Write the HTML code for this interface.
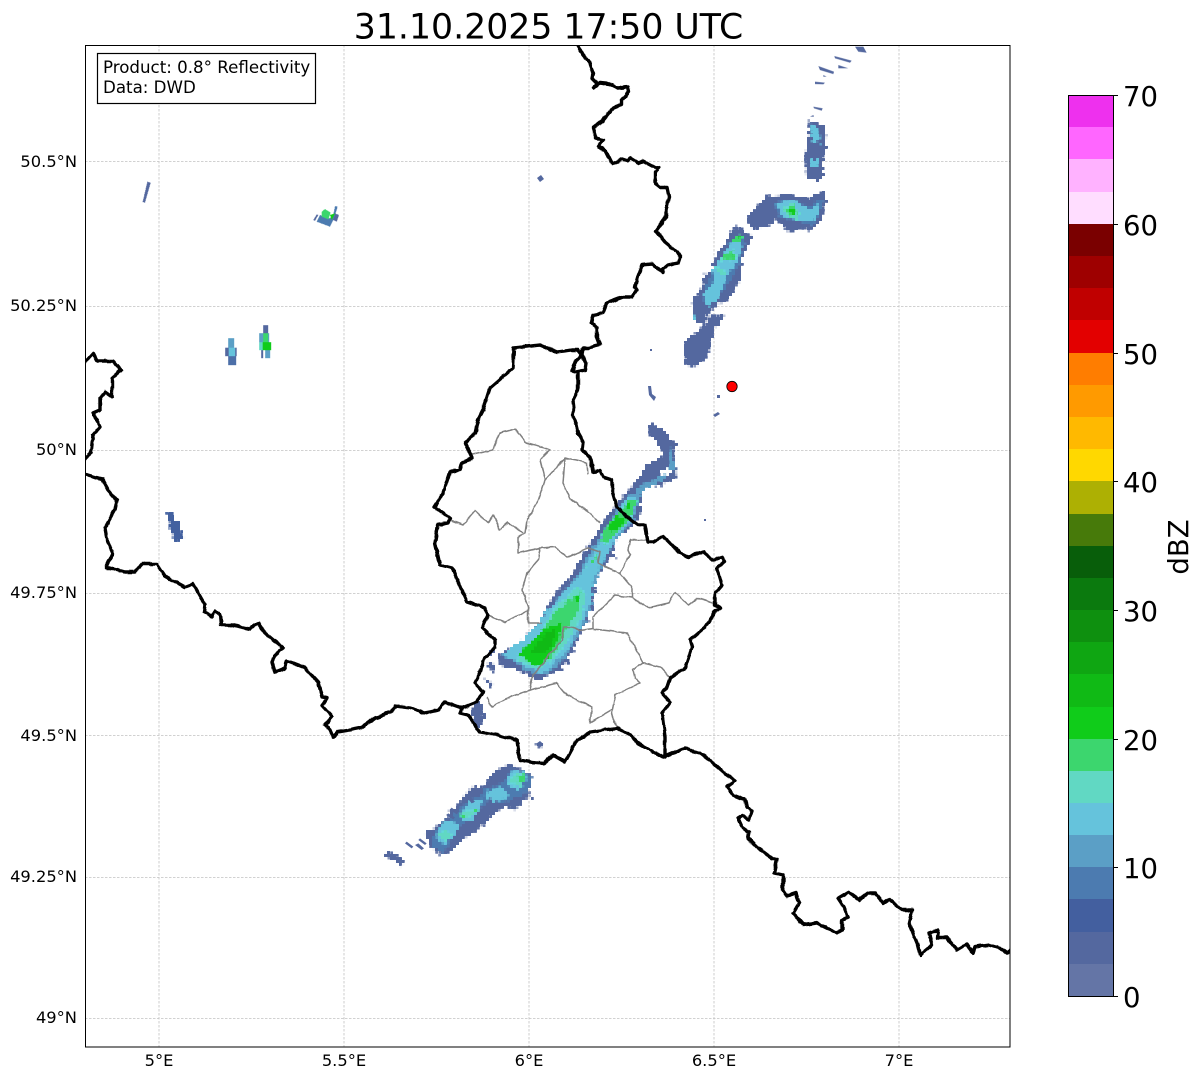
<!DOCTYPE html>
<html><head><meta charset="utf-8"><style>
html,body{margin:0;padding:0;background:#fff}
svg{display:block}
text{font-family:"DejaVu Sans","Liberation Sans",sans-serif;fill:#000}
.b{fill:none;stroke:#000;stroke-width:3.4;stroke-linejoin:round;stroke-linecap:round}
.g{fill:none;stroke:#808080;stroke-width:1.5;stroke-linejoin:round}
.t{font-size:16.3px}
.i{font-size:16.67px}
.c{font-size:27.5px}
</style></head><body>
<svg width="1202" height="1081" viewBox="0 0 1202 1081" xmlns="http://www.w3.org/2000/svg">
<defs>
<clipPath id="ax"><rect x="85" y="45" width="925" height="1002"/></clipPath>
<filter id="n" filterUnits="userSpaceOnUse" x="85" y="45" width="925" height="1002" color-interpolation-filters="sRGB">
<feTurbulence type="fractalNoise" baseFrequency="0.35" numOctaves="2" seed="4" result="t"/>
<feDisplacementMap in="SourceGraphic" in2="t" scale="6" xChannelSelector="R" yChannelSelector="G" result="d"/>
<feFlood x="85" y="45" width="1" height="1" flood-color="#000" result="f"/>
<feComposite in="f" in2="f" x="85" y="45" width="3" height="3" operator="over" result="c"/>
<feTile in="c" x="85" y="45" width="925" height="1002" result="g"/>
<feComposite in="d" in2="g" operator="in"/>
<feMorphology operator="dilate" radius="1"/>
</filter>
<filter id="w" filterUnits="userSpaceOnUse" x="85" y="45" width="925" height="1002" color-interpolation-filters="sRGB">
<feTurbulence type="fractalNoise" baseFrequency="0.12" numOctaves="2" seed="9" result="t"/>
<feDisplacementMap in="SourceGraphic" in2="t" scale="3" xChannelSelector="R" yChannelSelector="G"/>
</filter>
</defs>
<rect width="1202" height="1081" fill="#fff"/>
<text x="548.5" y="38.500" font-size="34.7" text-anchor="middle">31.10.2025 17:50 UTC</text>

<g stroke="#c2c2c2" stroke-width="0.8" stroke-dasharray="2.5 1.5" fill="none">
<path d="M159 45V1047M344 45V1047M529 45V1047M714 45V1047M899 45V1047"/>
<path d="M85 161.500H1010M85 306.500H1010M85 450.500H1010M85 593.500H1010M85 735.500H1010M85 877.500H1010M85 1018.500H1010"/>
</g>

<g clip-path="url(#ax)">
<g filter="url(#n)">
<g transform="translate(430,420) scale(.33333)">
<path fill="#54689f" d="M205 705 240 685 275 665 330 600 375 520 425 465 470 385 530 290 570 240 610 195 650 135 700 105 690 80 650 30 665 10 700 30 720 60 740 70 730 100 740 175 690 195 640 200 630 290 605 320 565 350 535 420 500 470 490 540 460 620 425 690 390 750 330 780 275 755 210 735Z"/>
<g stroke="#54689f" stroke-width="9" fill="none">
<path d="M475 555 492 565M460 595 478 605M415 690 432 696M395 720 416 726M375 745 396 755M495 440 512 450M525 395 556 410M540 380 552 390M435 465 446 470M455 425 466 430M180 695 192 700M230 690 246 700M260 680 275 690M385 530 400 538M355 590 365 596"/>
</g>
<path fill="#5b9fc6" d="M215 705 300 650 345 590 388 528 438 472 488 385 540 305 575 250 640 190 690 170 720 130 720 80 735 150 680 190 635 210 610 300 560 360 525 420 490 500 480 570 445 640 405 715 340 770 280 745Z"/>
<path fill="#65c3dc" d="M220 705 290 650 340 590 390 530 438 480 495 395 545 310 590 235 620 225 610 290 558 350 520 420 490 480 480 550 450 620 412 690 340 760 280 735Z"/>
<path fill="#61d8c3" d="M260 715 330 640 370 570 400 540 440 500 470 520 455 590 415 660 365 725 320 750Z"/>
<path fill="#3cd66e" d="M270 710 335 640 375 575 405 550 450 515 445 570 415 620 385 680 345 730 315 740Z"/>
<path fill="#10cc1a" d="M265 705 340 625 400 605 385 660 350 720 320 740Z"/>
<path fill="#10ba15" d="M305 695 345 640 380 625 365 675 335 705Z"/>
<path fill="#3cd66e" d="M510 360 535 310 565 280 600 240 620 240 605 290 560 340 525 375ZM470 440 510 395 490 430ZM430 530 450 520 445 545Z"/>
<path fill="#10cc1a" d="M530 320 560 285 590 300 565 330 540 335ZM580 260 600 245 600 265ZM430 530 450 525 445 545Z"/>
<path fill="#fff" d="M695 145 725 150 715 165 690 160Z"/>
<path fill="#54689f" d="M125 880 140 840 165 860 150 890 170 880 150 920 130 915ZM165 720 200 740 185 755ZM155 770 190 790 180 800ZM170 690 190 690 185 705Z"/>
<path fill="#54689f" d="M320 965 335 970 335 982 318 975Z"/>
</g>
<g transform="translate(670,40) scale(.33333)">
<path fill="#54689f" d="M45 905 100 860 130 825 160 830 130 880 110 950 80 985 45 975ZM70 775 100 735 100 700 135 700 130 670 195 555 245 590 215 660 210 720 170 785 130 800 100 850 70 840Z"/>
<path fill="#54689f" d="M240 520 290 470 350 462 420 475 460 455 470 480 455 540 420 575 405 565 360 575 320 540 290 560 250 570 230 540Z"/>
<path fill="#54689f" d="M418 240 465 260 470 320 460 360 460 410 440 425 412 415 405 360 412 310Z"/>
<path fill="#4c7bb0" d="M310 490 360 480 420 500 450 470 460 490 430 560 380 540 330 535ZM135 680 200 580 225 600 210 670 170 740 125 790 100 790 105 740Z"/>
<path fill="#65c3dc" d="M320 490 370 480 420 510 445 490 450 510 430 545 380 540 340 530ZM130 685 170 630 200 590 215 610 205 660 165 710 150 770 110 800 100 760 130 730ZM420 250 445 265 450 310 430 305ZM425 355 445 360 440 385 420 380ZM70 830 80 815 80 840Z"/>
<path fill="#61d8c3" d="M340 505 365 490 390 520 380 540 345 525ZM135 680 165 690 170 705 145 700ZM150 650 200 640 210 655 175 660 155 665Z"/>
<path fill="#3cd66e" d="M345 510 370 495 385 520 360 530ZM150 645 190 630 195 655 160 660ZM185 600 215 580 215 595 190 615Z"/>
<path fill="#10cc1a" d="M360 505 375 505 380 525 365 522ZM200 580 215 585 205 595ZM180 640 190 635 190 650ZM185 605 200 605 190 615Z"/>
</g>
<g transform="translate(370,730) scale(.33333)">
<path fill="#54689f" d="M160 305 185 300 205 285 225 270 300 175 320 170 340 175 360 140 380 120 420 100 490 140 470 200 440 240 400 230 375 250 345 280 285 325 235 370 210 375 180 345Z"/>
<g stroke="#54689f" stroke-width="9" fill="none"><path d="M375 125 396 135M360 145 386 160M290 205 311 215M265 310 286 325M275 285 301 295M460 195 491 205M240 240 261 250"/></g>
<path fill="#4c7bb0" d="M195 300 240 265 290 220 350 175 400 160 425 115 490 140 465 190 400 220 360 200 320 250 270 290 220 365 185 345Z"/>
<path fill="#65c3dc" d="M200 305 225 270 270 285 250 320 225 345 200 325ZM270 250 300 215 340 210 310 275 280 270ZM350 185 400 170 415 200 375 215 345 200ZM410 140 440 115 475 140 450 180 415 170Z"/>
<path fill="#61d8c3" d="M205 315 225 300 245 315 230 335ZM270 250 295 240 325 240 310 255 280 265ZM415 145 450 125 470 145 450 170 420 160Z"/>
<path fill="#3cd66e" d="M440 140 460 135 465 150 445 165ZM265 250 285 255 280 265ZM305 235 325 240 310 250Z"/>
<path fill="#54689f" d="M40 375 55 362 105 392 92 408Z"/>
</g>
<g transform="translate(0,340) scale(.33333)">
<path fill="#4361a0" d="M500 517 518 517 522 542 538 542 550 597 525 606 502 535Z"/>
</g>
</g>
<g transform="translate(670,40) scale(.33333)" fill="#54689f">
<path d="M430 200 458 205 455 212 432 205ZM435 125 465 128 460 133 435 132ZM445 78 492 95 490 102 450 90ZM493 48 545 62 540 68 495 55ZM505 75 535 85 505 85ZM555 20 580 20 590 38 565 35ZM460 105 470 110 460 110ZM430 225 432 230 420 230Z"/>
</g>
<g transform="translate(370,730) scale(.33333)" fill="#54689f">
<path d="M105 340 110 335 130 350 125 355ZM135 345 145 340 162 355 155 360ZM145 330 150 325 170 340 165 345ZM240 238 245 233 265 248 260 253ZM228 255 235 250 255 262 250 268ZM500 40 510 33 520 42 510 52ZM293 205 300 200 315 215 305 220Z"/>
</g>
<g transform="translate(100,170) scale(.33333)" shape-rendering="crispEdges">
<path fill="#54689f" d="M142 35 152 38 135 98 128 96Z"/>
<path fill="#54689f" d="M640 150 650 133 655 135 645 152ZM700 150 705 130 717 135 710 155Z"/>
<path fill="#4c7bb0" d="M660 135 690 145 700 135 705 108 713 110 700 150 690 170 650 155Z"/>
<path fill="#3cd66e" d="M665 125 675 117 692 128 685 148 665 140Z"/>
<path fill="#10cc1a" d="M690 135 705 130 695 150Z"/>
<rect x="384" y="505" width="18" height="28" fill="#5b9fc6"/><rect x="376" y="533" width="34" height="26" fill="#54689f"/><rect x="384" y="559" width="24" height="26" fill="#4c6fa8"/><rect x="386" y="533" width="20" height="26" fill="#65c3dc"/>
<rect x="490" y="465" width="14" height="25" fill="#54689f"/><rect x="478" y="490" width="30" height="50" fill="#5b9fc6"/><rect x="490" y="490" width="14" height="26" fill="#3cd66e"/><rect x="488" y="516" width="25" height="24" fill="#10cc1a"/><rect x="478" y="516" width="10" height="24" fill="#61d8c3"/><rect x="483" y="540" width="6" height="24" fill="#54689f"/><rect x="495" y="540" width="15" height="24" fill="#5b9fc6"/>
</g>
<g fill="#54689f">
<path d="M537 178 541 175 544 179 540 182Z"/>
<path d="M650 349h2v2h-2zM704 519h2v2h-2z"/>
<path d="M648 386 651 386 652 394 656 397 654 401 649 395Z"/>
<path d="M713 415 718 412 720 414 715 417Z"/><path d="M717 395h3v3h-3z"/>
</g>

<g class="g" filter="url(#w)">
<path d="M470 455 493 450 500 433 515 429 525 442 542 447 550 450 540 460 545 480 537 503 527 520 525 533 518 538 518 553 540 548 555 547 567 557 588 548 600 552 598 563 620 573 632 587 632 597"/>
<path d="M545 480 565 458 563 483 570 498 590 513 600 523"/>
<path d="M565 458 587 463 588 475"/>
<path d="M450 520 463 525 475 511 488 523 493 515 500 530 508 523 523 533"/>
<path d="M540 548 538 560 527 573 522 590 528 607 528 623 542 623"/>
<path d="M528 610 505 622 488 615"/>
<path d="M647 540 630 540 628 550 630 555 620 573"/>
<path d="M580 630 593 628 593 617 615 595 632 597 648 608 668 603 675 593 688 605 697 598 713 603"/>
<path d="M593 629 627 633 643 663 633 670 635 678 640 683 615 695 612 713 617 728"/>
<path d="M643 663 660 667 670 678"/>
<path d="M612 710 590 723 592 707 567 695 557 683 530 690 510 697 492 707 487 697"/>
<path d="M530 690 533 675 551 653 562 640 563 627 570 627 580 630"/>
</g>

<g class="b" filter="url(#w)">
<path d="M578 46 583 55 589 62 593 73 592 78 597 83 594 88 600 83 610 84 618 88 628 87 629 92 622 100 622 105 613 108 603 120 593 128 596 138 603 140 598 147 605 150 612 164 622 159 628 161 630 158 638 163 643 161 654 167 659 168 655 172 655 183 660 187 667 187 669 197 666 210 666 217 656 231 665 242 677 252 680 257 678 263 668 265 662 270 663 273 652 264 642 265 639 273 635 287 637 290 632 297 623 297 607 303 603 313 593 315 591 322 597 328 597 337 600 345 588 348 583 348 582 355 586 363 585 370 575 372 572 370 577 360 582 355"/>
<path d="M578 373 578 390 573 400 574 410 572 415 575 420 578 433 583 442 582 450 590 457 593 472 600 470 603 477 612 480 612 490 617 507 627 517 638 525 645 525 648 542 653 542 663 536 680 553 688 557 703 552 713 560 722 557 725 562 717 568 722 585 715 593 715 605 720 608 715 612 705 627 690 640 692 647 685 668 670 678 667 687 662 693 670 702 662 713 665 737 665 757"/>
<path d="M582 355 578 350 572 350 557 352 540 345 514 348 513 368 490 388 483 410 478 420 475 433 465 443 472 458 462 463 460 470 450 472 443 493 434 507 450 518 448 523 438 525 435 543 440 565 452 568 467 602 485 608 488 615 482 628 495 640 495 648 485 657 480 673 475 683 483 692 477 702 462 708 460 713 468 715 480 732 498 735 517 740 520 760 530 762 545 763 553 755 565 762 577 740 590 732 617 728 630 735 638 743 663 757 668 755 685 748 692 751 700 753 713 763 723 772 735 781 727 787 733 795 745 800 747 807 752 811 749 820 743 815 738 818 742 827 749 832 748 838 757 847 773 859 777 859 774 873 783 875 783 890 787 896 796 893 799 903 793 913 803 925 817 923 837 933 842 930 842 920 848 917 844 907 838 898 848 892 859 900 868 893 875 893 883 903 889 899 902 910 912 910 909 923 917 943 920 955 932 945 929 933 938 930 937 938 947 938 957 950 967 944 973 953 975 947 989 945 1002 949 1007 953 1011 950"/>
<path d="M84 363 93 353 97 361 113 361 121 370 112 378 112 397 105 392 100 398 100 410 93 413 100 427 93 435 91 453 84 459"/>
<path d="M84 474 102 479 108 490 117 500 115 510 105 528 107 540 113 553 106 568 110 568 125 572 135 572 142 564 157 564 165 576 185 587 193 584 205 605 204 612 212 616 215 611 220 615 221 625 232 625 250 629 258 623 265 633 283 648 275 655 272 662 275 672 285 668 287 661 305 668 318 682 322 697 327 698 322 706 332 717 325 725 330 730 333 737 338 732 350 730 360 728 375 718 392 712 395 706 410 708 425 713 438 710 445 702 462 708"/>
</g>
<circle cx="732" cy="386.500" r="5.200" fill="#ff0000" stroke="#000" stroke-width="0.8"/>
</g>
<rect x="85.500" y="45.500" width="924.500" height="1001.500" fill="none" stroke="#000" stroke-width="1"/>

<rect x="97.500" y="53.500" width="218" height="50" fill="#fff" stroke="#000" stroke-width="1.200"/>
<text x="103" y="73" class="i">Product: 0.8° Reflectivity</text>
<text x="103" y="93" class="i">Data: DWD</text>

<g class="t" text-anchor="end">
<text x="77" y="167">50.5°N</text><text x="77" y="311">50.25°N</text><text x="77" y="455">50°N</text><text x="77" y="598">49.75°N</text><text x="77" y="741">49.5°N</text><text x="77" y="882">49.25°N</text><text x="77" y="1023">49°N</text>
</g>
<g class="t" text-anchor="middle">
<text x="159" y="1066">5°E</text><text x="344" y="1066">5.5°E</text><text x="529" y="1066">6°E</text><text x="714" y="1066">6.5°E</text><text x="899" y="1066">7°E</text>
</g>

<g shape-rendering="crispEdges">
<rect x="1068" y="96" width="45" height="32" fill="#ee30ee"/>
<rect x="1068" y="127" width="45" height="32" fill="#ff66ff"/>
<rect x="1068" y="159" width="45" height="33" fill="#ffb2ff"/>
<rect x="1068" y="192" width="45" height="32" fill="#ffddff"/>
<rect x="1068" y="224" width="45" height="32" fill="#7a0000"/>
<rect x="1068" y="256" width="45" height="32" fill="#9e0000"/>
<rect x="1068" y="288" width="45" height="32" fill="#c00000"/>
<rect x="1068" y="320" width="45" height="33" fill="#e30000"/>
<rect x="1068" y="353" width="45" height="32" fill="#ff7d00"/>
<rect x="1068" y="385" width="45" height="32" fill="#ff9a00"/>
<rect x="1068" y="417" width="45" height="32" fill="#ffb900"/>
<rect x="1068" y="449" width="45" height="32" fill="#ffd800"/>
<rect x="1068" y="481" width="45" height="33" fill="#adb003"/>
<rect x="1068" y="514" width="45" height="32" fill="#477a0a"/>
<rect x="1068" y="546" width="45" height="32" fill="#085e0a"/>
<rect x="1068" y="578" width="45" height="32" fill="#0b7a0e"/>
<rect x="1068" y="610" width="45" height="32" fill="#0e900f"/>
<rect x="1068" y="642" width="45" height="32" fill="#0fa612"/>
<rect x="1068" y="674" width="45" height="33" fill="#10ba15"/>
<rect x="1068" y="707" width="45" height="32" fill="#10cc1a"/>
<rect x="1068" y="739" width="45" height="32" fill="#3cd66e"/>
<rect x="1068" y="771" width="45" height="32" fill="#61d8c3"/>
<rect x="1068" y="803" width="45" height="32" fill="#65c3dc"/>
<rect x="1068" y="835" width="45" height="32" fill="#5b9fc6"/>
<rect x="1068" y="867" width="45" height="32" fill="#4c7bb0"/>
<rect x="1068" y="899" width="45" height="33" fill="#435f9f"/>
<rect x="1068" y="932" width="45" height="32" fill="#54689f"/>
<rect x="1068" y="964" width="45" height="32" fill="#6475a6"/>
</g>
<rect x="1068.500" y="95.500" width="45" height="901" fill="none" stroke="#000" stroke-width="1"/>
<g stroke="#000" stroke-width="1">
<path d="M1113 95.500h5M1113 224.500h5M1113 353.500h5M1113 481.500h5M1113 610.500h5M1113 739.500h5M1113 867.500h5M1113 996.500h5"/>
</g>
<g class="c">
<text x="1123" y="106">70</text><text x="1123" y="235">60</text><text x="1123" y="364">50</text><text x="1123" y="492">40</text><text x="1123" y="621">30</text><text x="1123" y="750">20</text><text x="1123" y="878">10</text><text x="1123" y="1007">0</text>
</g>
<text class="c" transform="translate(1188,547) rotate(-90)" text-anchor="middle">dBZ</text>
</svg>
</body></html>
